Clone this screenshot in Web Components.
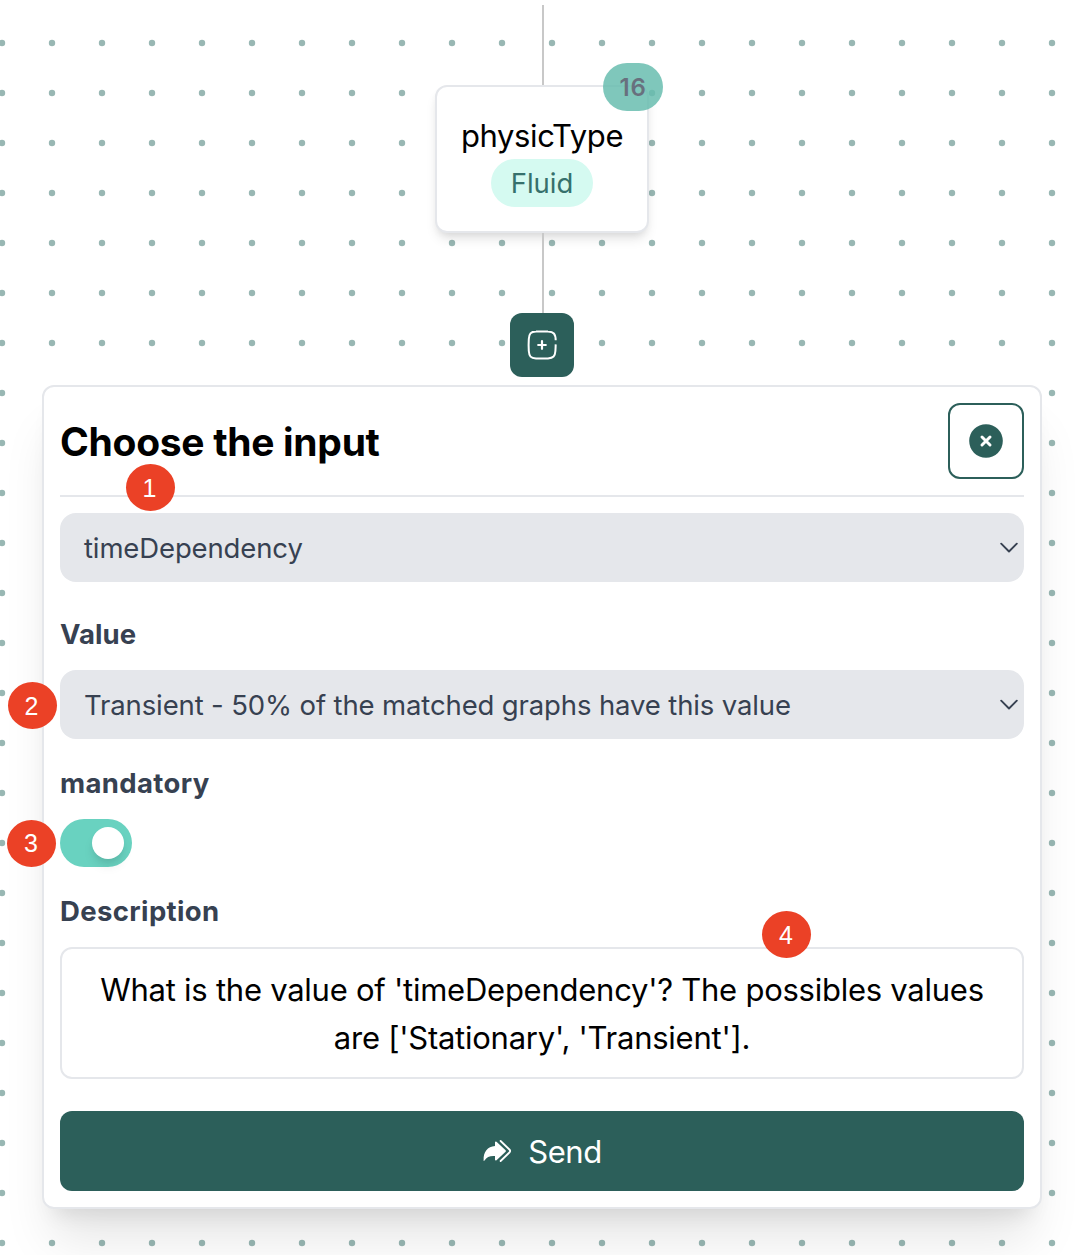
<!DOCTYPE html>
<html lang="en">
<head>
<meta charset="utf-8">
<title>Graph input</title>
<style>
html,body{margin:0;background:#fff;overflow:hidden}
body{font-family:Inter,"Liberation Sans",sans-serif;width:1090px;height:1255px}
</style>
</head>
<body>
<graph-canvas>
  <graph-edge></graph-edge>
  <graph-node count="16" name="physicType"><node-pill>Fluid</node-pill></graph-node>
  <graph-edge></graph-edge>
  <add-button></add-button>
  <input-panel heading="Choose the input">
    <select-box>timeDependency</select-box>
    <field-label style="margin-top:32px;letter-spacing:.05px">Value</field-label>
    <select-box>Transient - 50% of the matched graphs have this value</select-box>
    <field-label>mandatory</field-label>
    <toggle-switch></toggle-switch>
    <field-label>Description</field-label>
    <text-box>What is the value of 'timeDependency'? The possibles values<br>are ['Stationary', 'Transient'].</text-box>
    <send-button>Send</send-button>
  </input-panel>
  <step-marker style="left:126px;top:464px;text-indent:-2px">1</step-marker>
  <step-marker style="left:7.5px;top:682px;text-indent:-1px">2</step-marker>
  <step-marker style="left:7px;top:819.5px;line-height:47px;text-indent:-1px">3</step-marker>
  <step-marker style="left:762px;top:911px;text-indent:-1px">4</step-marker>
</graph-canvas>
<script>
function define(name, markup, setup) {
  customElements.define(name, class extends HTMLElement {
    constructor() {
      super();
      this.attachShadow({mode: 'open'}).innerHTML = markup;
    }
    connectedCallback() { if (setup) setup(this, this.shadowRoot); }
  });
}
define('graph-canvas', `<style>
:host{display:flex;flex-direction:column;align-items:center;position:relative;box-sizing:border-box;width:1084px;height:1255px;padding-top:5px}
.dots{position:absolute;left:0;top:0;width:1084px;height:1255px}
</style><svg class="dots"><defs><pattern id="d" x="-23" y="18" width="50" height="50" patternUnits="userSpaceOnUse"><circle cx="25" cy="25" r="3.2" fill="#98b7b3"/></pattern></defs><rect width="1084" height="1255" fill="url(#d)"/></svg><slot></slot>`);
define('graph-edge', `<style>:host{display:block;position:relative;left:1px;width:2px;height:80px;background:#c8c8c8}</style>`);
define('graph-node', `<style>
:host{display:flex;flex-direction:column;align-items:center;position:relative;box-sizing:border-box;width:214px;height:148px;padding:24px 0;border:2px solid #e5e7eb;border-radius:12px;background:#fff;box-shadow:0 8px 12px -2px rgba(0,0,0,.1),0 4px 8px -4px rgba(0,0,0,.1)}
.name{height:48px;font-size:31px;line-height:50px;letter-spacing:-.38px;white-space:nowrap;color:#000}
.count{position:absolute;right:-16px;top:-24px;width:60px;height:48px;line-height:49px;border-radius:24px;text-align:center;background:rgba(103,188,174,.84);color:#68707e;font-weight:600;font-size:24px;letter-spacing:.8px}
</style><span class="name"></span><slot></slot><span class="count"></span>`, (h, r) => {
  r.querySelector('.name').textContent = h.getAttribute('name');
  r.querySelector('.count').textContent = h.getAttribute('count');
});
define('node-pill', `<style>:host{display:block;width:102px;height:48px;border-radius:24px;background:#d5faf1;color:#36706c;font-size:27.5px;line-height:48px;text-align:center}</style><slot></slot>`);
define('add-button', `<style>:host{display:block;position:relative;width:64px;height:64px;border-radius:12px;background:#2c5f5a;margin-bottom:8px}svg{display:block}</style>
<svg width="64" height="64" fill="none" stroke="#fff" stroke-linecap="round"><path d="M45.7 27.2C45.5 20.5 43.6 18.8 38 18.6Q32 18.2 26 18.6C20.5 18.8 19.2 20.5 18.8 26Q18.4 32 18.8 38C19.2 43.4 20.7 45 26 45.4Q32 45.8 38 45.4C43.4 45 45 43.4 45.4 38Q45.6 35 45.7 31.4" stroke-width="2" stroke-linecap="butt"/><path d="M32 28.2V35.800M28.200 32H35.800" stroke-width="2.200"/></svg>`);
define('input-panel', `<style>
:host{display:flex;flex-direction:column;position:relative;box-sizing:border-box;width:1000px;height:824px;padding:16px;border:2px solid #e5e7eb;border-radius:12px;background:#fff;box-shadow:0 40px 50px -10px rgba(0,0,0,.1),0 16px 20px -12px rgba(0,0,0,.1)}
header{display:flex;justify-content:space-between;align-items:center;height:76px;padding-bottom:16px;border-bottom:2px solid #e5e7eb;margin-bottom:16px}
h2{margin:0;padding-top:2px;font-size:39px;font-weight:700;line-height:56px;letter-spacing:-.3px;color:#000;white-space:nowrap}
button{box-sizing:border-box;width:76px;height:76px;padding:0;border:2px solid #2c5f5a;border-radius:12px;background:#fff}
svg{display:block}
</style><header><h2></h2><button aria-label="Close"><svg width="72" height="72"><circle cx="36" cy="36" r="16.8" fill="#2c5f5a"/><path d="M32 32L40 40M40 32L32 40" stroke="#fff" stroke-width="3" stroke-linecap="round"/></svg></button></header><slot></slot>`, (h, r) => {
  r.querySelector('h2').textContent = h.getAttribute('heading');
});
define('select-box', `<style>:host{display:flex;align-items:center;justify-content:space-between;box-sizing:border-box;height:69px;padding:0 5px 0 24px;border-radius:16px;background:#e5e7eb;color:#374151;font-size:27.5px;letter-spacing:-.13px;white-space:nowrap}</style><span><slot></slot></span><svg width="20" height="14" fill="none" stroke="#374151" stroke-width="1.900" stroke-linecap="round" stroke-linejoin="round"><path d="M2.200 2.700L10 10.500L17.800 2.700"/></svg>`);
define('field-label', `<style>:host{display:block;margin:24px 0 16px;line-height:40px;font-size:27.5px;font-weight:700;letter-spacing:.37px;color:#374151}</style><slot></slot>`);
define('toggle-switch', `<style>:host{display:flex;justify-content:flex-end;align-items:center;box-sizing:border-box;width:72px;height:48px;padding-right:8px;border-radius:24px;background:#69d2c0}i{width:32px;height:32px;border-radius:50%;background:#fff;box-shadow:0 8px 12px -2px rgba(0,0,0,.1),0 4px 8px -4px rgba(0,0,0,.1)}</style><i></i>`);
define('text-box', `<style>:host{display:block;box-sizing:border-box;height:132px;padding:17px 0 15px;border:2px solid #e5e7eb;border-radius:12px;text-align:center;font-size:31px;line-height:48px;letter-spacing:-.25px;color:#000;white-space:nowrap}</style><slot></slot>`);
define('send-button', `<style>:host{display:flex;align-items:center;justify-content:center;gap:16px;height:80px;margin-top:32px;border-radius:12px;background:#2c5f5a;color:#fff;font-size:31px;letter-spacing:-.4px}</style>
<svg width="30" height="26"><path d="M1.6 22.4C1.3 14 5.500 8.600 13 8.100V4.200Q13.300 2.900 14.500 3.700L23.600 12.200Q24.400 13 23.600 13.800L14.500 22.300Q13.300 23.100 13 21.800V18C8 17.600 4.800 18.900 2.500 22.600Q1.800 23.400 1.600 22.400Z" fill="#fff"/><path d="M18.600 3L27.400 11.500Q28.900 13 27.400 14.500L18.600 23" fill="none" stroke="#fff" stroke-width="1.800" stroke-linecap="round"/></svg><span><slot></slot></span>`);
define('step-marker', `<style>:host{display:block;position:absolute;width:49px;height:47px;border-radius:50%;background:#eb4126;color:#fff;font:25px/48px "Liberation Sans",sans-serif;text-align:center}</style><slot></slot>`);
</script>
</body>
</html>
